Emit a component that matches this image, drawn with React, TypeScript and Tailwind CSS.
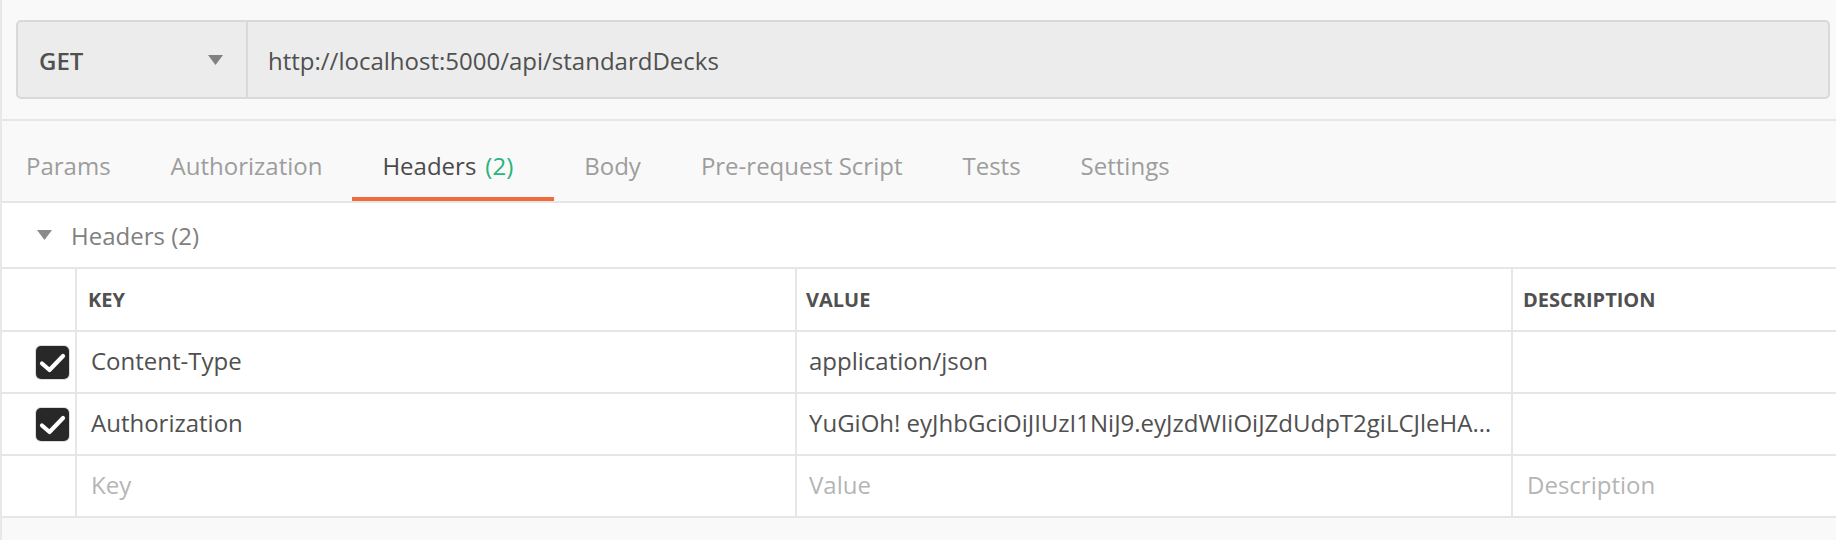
import React from "react";

const TABS = ["Params", "Authorization", "Headers", "Body", "Pre-request Script", "Tests", "Settings"];

type Row = { key: string; value: string; checked: boolean };

const ROWS: Row[] = [
  { key: "Content-Type", value: "application/json", checked: true },
  {
    key: "Authorization",
    value:
      "YuGiOh! eyJhbGciOiJIUzI1NiJ9.eyJzdWIiOiJZdUdpT2giLCJleHAiOjE1NjAwMDAwMDB9.signature",
    checked: true,
  },
];

function Checkbox() {
  return (
    <div className="flex h-[33px] w-[33px] items-center justify-center rounded-[5px] bg-[#282828] ring-1 ring-[#dcdcdc]">
      <svg width="33" height="33" viewBox="0 0 33 33" fill="none">
        <path d="M6 17.5 L13.5 24 L27 10" stroke="#fff" strokeWidth="4.2" strokeLinecap="round" strokeLinejoin="round" />
      </svg>
    </div>
  );
}

export default function App() {
  return (
    <div className="h-[540px] w-[1836px] overflow-hidden border-l-2 border-[#e8e8e8] bg-[#f9f9f9] font-['Open_Sans',sans-serif]">
      {/* url bar */}
      <div className="pb-[20px] pl-[14px] pr-[6px] pt-[20px]">
        <div className="flex h-[79px] rounded-[5px] border-2 border-[#d9d9d9] bg-[#ececec]">
          <div className="flex w-[230px] items-center justify-between border-r-2 border-[#d9d9d9] pl-[21px] pr-[23px] pt-[3px]">
            <span className="text-[24px] font-semibold text-[#505050]">GET</span>
            <svg width="15" height="10" viewBox="0 0 15 10" className="-mt-[2px]">
              <path d="M0 0 H15 L7.5 10 Z" fill="#808080" />
            </svg>
          </div>
          <div className="flex items-center pl-[20px] pt-[3px] text-[24px] text-[#505050]">
            http://localhost:5000/api/standardDecks
          </div>
        </div>
      </div>

      {/* tabs */}
      <div className="flex h-[84px] border-y-2 border-[#e6e6e6]">
        {TABS.map((t, i) => {
          const active = t === "Headers";
          return (
            <div
              key={t}
              className={`flex h-[80px] items-center border-b-4 pt-[13px] text-[24px] ${
                i === 0 ? "pl-[24px]" : "pl-[30px]"
              } ${active ? "border-[#f26b3a] pr-[41px] text-[#4a4a4a]" : "border-transparent pr-[30px] text-[#9d9d9d]"}`}
            >
              {t}
              {active && <span className="ml-[9px] text-[#2bb37d]">(2)</span>}
            </div>
          );
        })}
      </div>

      {/* headers section */}
      <div className="bg-white">
        <div className="flex h-[66px] items-center border-b-2 border-[#e6e6e6] pl-[35px] pt-[2px]">
          <svg width="15" height="10" viewBox="0 0 15 10" className="-mt-[2px]">
            <path d="M0 0 H15 L7.5 10 Z" fill="#8a8a8a" />
          </svg>
          <span className="ml-[19px] text-[24px] text-[#808080]">Headers (2)</span>
        </div>

        <div className="grid grid-cols-[75px_720px_716px_1fr]">
          {/* head */}
          <div className="h-[63px] border-b-2 border-r-2 border-[#e6e6e6]" />
          <div className="flex h-[63px] items-center border-b-2 border-r-2 border-[#e6e6e6] pl-[11px] text-[20px] font-bold text-[#505050]">
            KEY
          </div>
          <div className="flex h-[63px] items-center border-b-2 border-r-2 border-[#e6e6e6] pl-[9px] text-[20px] font-bold text-[#505050]">
            VALUE
          </div>
          <div className="flex h-[63px] items-center border-b-2 border-[#e6e6e6] pl-[10px] text-[20px] font-bold text-[#505050]">
            DESCRIPTION
          </div>

          {ROWS.map((r) => (
            <React.Fragment key={r.key}>
              <div className="flex h-[62px] items-center border-b-2 border-r-2 border-[#e6e6e6] pl-[34px]">
                {r.checked && <Checkbox />}
              </div>
              <div className="flex h-[62px] items-center border-b-2 border-r-2 border-[#e6e6e6] pb-[3px] pl-[14px] text-[24px] text-[#505050]">
                {r.key}
              </div>
              <div className="flex h-[62px] min-w-0 items-center border-b-2 border-r-2 border-[#e6e6e6] pb-[3px] pl-[12px] pr-[16px] text-[24px] text-[#505050]">
                <span className="truncate">{r.value}</span>
              </div>
              <div className="h-[62px] border-b-2 border-[#e6e6e6]" />
            </React.Fragment>
          ))}

          {/* empty row */}
          <div className="h-[62px] border-b-2 border-r-2 border-[#e6e6e6]" />
          <div className="flex h-[62px] items-center border-b-2 border-r-2 border-[#e6e6e6] pb-[3px] pl-[14px] text-[24px] text-[#b5b5b5]">
            Key
          </div>
          <div className="flex h-[62px] items-center border-b-2 border-r-2 border-[#e6e6e6] pb-[3px] pl-[12px] text-[24px] text-[#b5b5b5]">
            Value
          </div>
          <div className="flex h-[62px] items-center border-b-2 border-[#e6e6e6] pb-[3px] pl-[14px] text-[24px] text-[#b5b5b5]">
            Description
          </div>
        </div>
      </div>
    </div>
  );
}
